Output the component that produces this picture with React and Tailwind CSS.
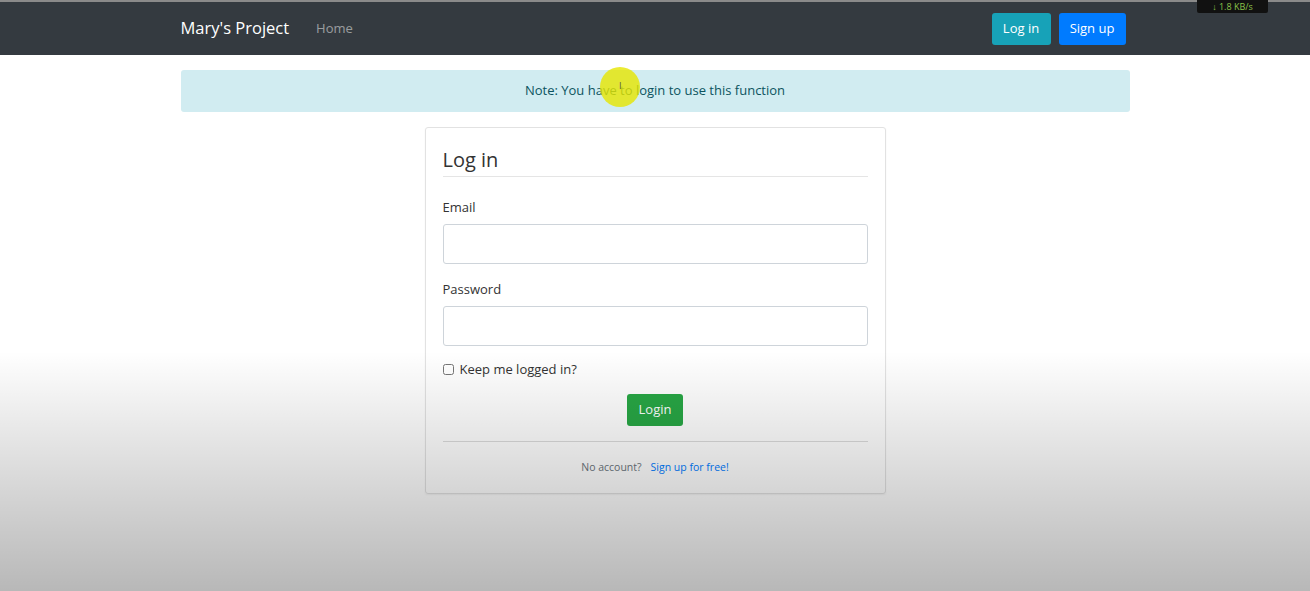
import React from 'react';

export default function App() {
  return (
    <div className="relative h-[591px] w-full overflow-hidden bg-white font-['Open_Sans',sans-serif] text-[13px] text-[#212529]">
      {/* navbar */}
      <nav className="h-[55px] border-t-2 border-[#8a8a8a] bg-[#343a40]">
        <div className="mx-auto flex h-full w-[949px] items-center">
          <span className="text-[16.5px] text-white">Mary's Project</span>
          <a className="ml-[27px] text-[13px] text-white/50">Home</a>
          <div className="ml-auto mr-[4px] flex gap-[8px]">
            <button className="h-[32px] w-[59px] rounded-[3px] bg-[#17a2b8] text-[13px] text-white">Log in</button>
            <button className="h-[32px] w-[67px] rounded-[3px] bg-[#007bff] text-[13px] text-white">Sign up</button>
          </div>
        </div>
      </nav>

      <main className="mx-auto w-[949px] pt-[15px]">
        <div className="flex h-[42px] items-center justify-center rounded-[3px] bg-[#d1ecf1] text-[13px] text-[#0c5460]">
          Note: You have to login to use this function
        </div>

        <div className="mx-auto mt-[15px] w-[461px] rounded-[3px] border border-[#e2e2e2] px-[17px] pb-[17px] pt-[18px] shadow-[0_1px_2px_rgba(0,0,0,0.06)]">
          <h3 className="border-b border-[#e5e5e5] pb-[2px] text-[20px] leading-[28px] text-[#333]">Log in</h3>

          <label className="mt-[21px] block text-[13px] leading-[18px] text-[#333]">Email</label>
          <input className="mt-[8px] block h-[40px] w-full rounded-[3px] border border-[#ced4da] bg-white" />

          <label className="mt-[16px] block text-[13px] leading-[18px] text-[#333]">Password</label>
          <input type="password" className="mt-[8px] block h-[40px] w-full rounded-[3px] border border-[#ced4da] bg-white" />

          <div className="mt-[14px] flex items-center gap-[6px]">
            <input type="checkbox" className="h-[11px] w-[11px] accent-[#555]" />
            <span className="text-[13px] leading-[18px] text-[#333]">Keep me logged in?</span>
          </div>

          <div className="mt-[16px] flex justify-center">
            <button className="h-[32px] w-[56px] rounded-[3px] bg-[#28a745] text-[13px] text-white">Login</button>
          </div>

          <div className="mt-[15px] border-t border-[#dcdcdc] pt-[18px] text-center text-[10.5px]">
            <span className="text-[#6c757d]">No account?</span>
            <a className="ml-[9px] text-[#007bff]">Sign up for free!</a>
          </div>
        </div>
      </main>

      {/* screen-recording overlays */}
      <div className="pointer-events-none absolute inset-x-0 bottom-0 h-[240px] bg-gradient-to-b from-transparent to-black/[0.28]" />
      <div className="pointer-events-none absolute left-[600px] top-[67px] h-[40px] w-[40px] rounded-full bg-[#e6e600]/80" />
      <div className="pointer-events-none absolute left-[619px] top-[81px] text-[9px] leading-none text-[#555]">I</div>
      <div className="pointer-events-none absolute left-[1197px] top-0 flex h-[13px] w-[71px] items-center justify-center rounded-b-[2px] bg-[#111] text-[9px] text-[#8bc34a]">
        ↓ 1.8 KB/s
      </div>
    </div>
  );
}
